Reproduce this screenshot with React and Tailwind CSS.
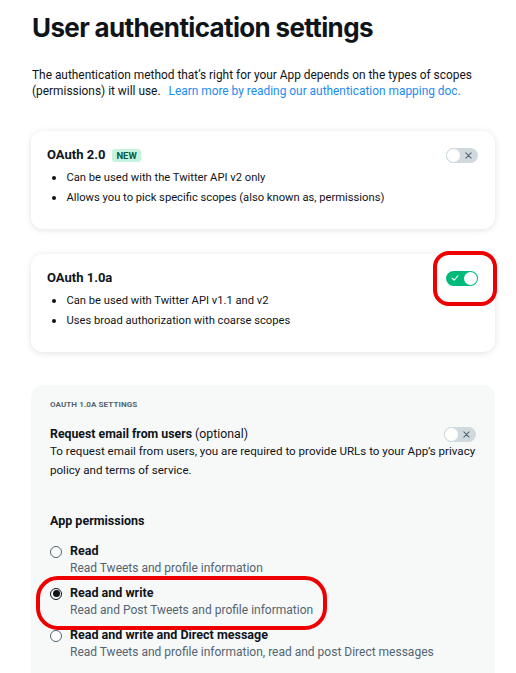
import React from "react";

function Toggle({ on }) {
  if (on) {
    return (
      <div className="relative w-[32px] h-[15px] rounded-full bg-[#00ba7c] shrink-0">
        <svg className="absolute left-[5px] top-[3.5px]" width="8" height="8" viewBox="0 0 10 10">
          <path d="M1.5 5.3 L4 7.6 L8.6 2.2" fill="none" stroke="white" strokeWidth="1.4" strokeLinecap="round" strokeLinejoin="round" />
        </svg>
        <div className="absolute right-[1px] top-[1px] w-[13px] h-[13px] rounded-full bg-white" />
      </div>
    );
  }
  return (
    <div className="relative w-[32px] h-[15px] rounded-full bg-[#cfd9de] shrink-0">
      <div className="absolute left-0 top-0 w-[15px] h-[15px] rounded-full bg-white border border-[#cfd9de]" />
      <svg className="absolute right-[6px] top-[4px]" width="7" height="7" viewBox="0 0 8 8">
        <path d="M1 1 L7 7 M7 1 L1 7" fill="none" stroke="#536471" strokeWidth="1.2" strokeLinecap="round" />
      </svg>
    </div>
  );
}

function Bullet({ children }) {
  return (
    <li className="flex items-center h-[20px]">
      <span className="w-[3.5px] h-[3.5px] rounded-full bg-[#0f1419] ml-[5px] mr-[11px]" />
      <span>{children}</span>
    </li>
  );
}

function Radio({ checked }) {
  if (checked) {
    return (
      <span className="w-[12px] h-[12px] rounded-full border-[1.5px] border-[#0f1419] flex items-center justify-center shrink-0">
        <span className="w-[7px] h-[7px] rounded-full bg-[#0f1419]" />
      </span>
    );
  }
  return <span className="w-[12px] h-[12px] rounded-full border border-[#536471] bg-white shrink-0" />;
}

export default function App() {
  return (
    <div
      className="w-[516px] h-[673px] overflow-hidden bg-white text-[#0f1419]"
      style={{ fontFamily: "Roboto, 'Noto Sans', sans-serif" }}
    >
      <div className="pl-[32px] pr-[21px]">
        <h1
          className="text-[26px] font-bold leading-[36px] pt-[10px] tracking-[-0.65px]"
          style={{ fontFamily: "Inter, Roboto, sans-serif" }}
        >
          User authentication settings
        </h1>
        <p className="mt-[21px] text-[11.9px] leading-[16px] text-[#0f1419]">
          The authentication method that’s right for your App depends on the types of scopes (permissions) it will use.{" "}
          <span className="ml-[5px] text-[#1d8cf0]">Learn more by reading our authentication mapping doc.</span>
        </p>
      </div>

      <div className="ml-[31px] w-[464px] mt-[32px] flex flex-col gap-[25px]">
        <div className="rounded-[12px] bg-white shadow-[0_1px_6px_rgba(0,0,0,0.12)] h-[98px] pl-[16px] pr-[17px] pt-[14px]">
          <div className="flex items-center justify-between h-[20px]">
            <div className="flex items-center gap-[7px]">
              <span className="text-[13px] font-bold">OAuth 2.0</span>
              <span className="text-[9.5px] font-bold bg-[#c6f3e0] text-[#0a5c3f] px-[4px] h-[13px] leading-[13px] rounded-[3px]">NEW</span>
            </div>
            <Toggle on={false} />
          </div>
          <ul className="text-[11.2px] mt-[3px] leading-[20px]">
            <Bullet>Can be used with the Twitter API v2 only</Bullet>
            <Bullet>Allows you to pick specific scopes (also known as, permissions)</Bullet>
          </ul>
        </div>

        <div className="relative rounded-[12px] bg-white shadow-[0_1px_6px_rgba(0,0,0,0.12)] h-[98px] pl-[16px] pr-[17px] pt-[14px]">
          <div className="flex items-center justify-between h-[20px]">
            <span className="text-[13px] font-bold">OAuth 1.0a</span>
            <Toggle on={true} />
          </div>
          <ul className="text-[11.2px] mt-[3px] leading-[20px]">
            <Bullet>Can be used with Twitter API v1.1 and v2</Bullet>
            <Bullet>Uses broad authorization with coarse scopes</Bullet>
          </ul>
          <div className="absolute left-[402px] top-[-3px] w-[64px] h-[55px] rounded-[16px] border-[4px] border-[#ee0000]" />
        </div>
      </div>

      <div className="ml-[31px] w-[464px] mt-[33px] rounded-t-[12px] bg-[#f7f9f9] pl-[19px] pr-[19px] pt-[15px] pb-[20px]">
        <div className="text-[8px] font-bold text-[#536471] tracking-[0.1px] leading-[10px]">OAUTH 1.0A SETTINGS</div>
        <div className="mt-[16px] flex items-center justify-between h-[16px]">
          <div className="text-[12.3px]">
            <span className="font-bold">Request email from users</span> <span>(optional)</span>
          </div>
          <Toggle on={false} />
        </div>
        <p className="text-[11.6px] leading-[19px] mt-[0px] -mr-[12px]">
          To request email from users, you are required to provide URLs to your App’s privacy policy and terms of service.
        </p>

        <div className="mt-[33px] text-[12.5px] font-bold leading-[16px]">App permissions</div>

        <div className="relative mt-[14px] flex flex-col gap-[9px]">
          <div>
            <div className="flex items-center gap-[8px] h-[17px]">
              <Radio checked={false} />
              <span className="text-[12.5px] font-bold">Read</span>
            </div>
            <div className="pl-[20px] text-[12px] text-[#536471] leading-[16px]">Read Tweets and profile information</div>
          </div>
          <div>
            <div className="flex items-center gap-[8px] h-[17px]">
              <Radio checked={true} />
              <span className="text-[12.5px] font-bold">Read and write</span>
            </div>
            <div className="pl-[20px] text-[12px] text-[#536471] leading-[16px]">Read and Post Tweets and profile information</div>
          </div>
          <div>
            <div className="flex items-center gap-[8px] h-[17px]">
              <Radio checked={false} />
              <span className="text-[12.5px] font-bold">Read and write and Direct message</span>
            </div>
            <div className="pl-[20px] text-[12px] text-[#536471] leading-[16px]">Read Tweets and profile information, read and post Direct messages</div>
          </div>
          <div className="absolute left-[-14px] top-[33px] w-[291px] h-[54px] rounded-[22px] border-[4px] border-[#ee0000]" />
        </div>
      </div>
    </div>
  );
}
